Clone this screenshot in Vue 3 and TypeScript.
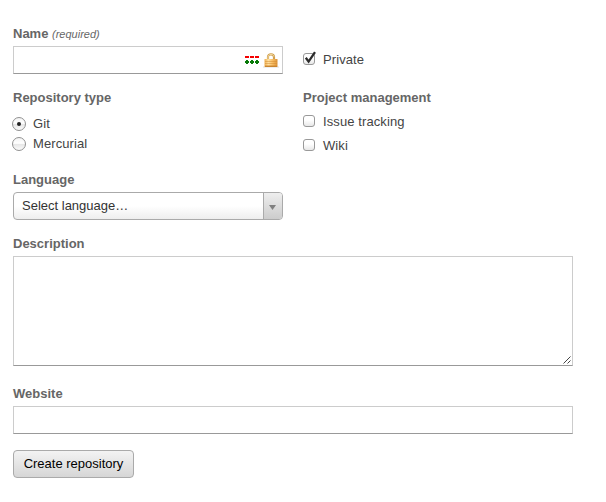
<script setup lang="ts">
import { ref } from 'vue'

interface Choice {
  id: string
  label: string
}

const repositoryTypes: Choice[] = [
  { id: 'git', label: 'Git' },
  { id: 'hg', label: 'Mercurial' },
]
const features = ref([
  { id: 'issues', label: 'Issue tracking', checked: false },
  { id: 'wiki', label: 'Wiki', checked: false },
])
const name = ref('')
const isPrivate = ref(true)
const scm = ref('git')
const description = ref('')
const website = ref('')
</script>

<template>
  <form class="form" @submit.prevent>
    <div class="row">
      <div class="field">
        <label class="title" for="name">Name <em>(required)</em></label>
        <div class="box">
          <input id="name" v-model="name" type="text" />
          <svg class="dots" width="14" height="9" viewBox="0 0 14 9">
            <path d="M0 0h4v2H0zM5 0h4v2H5zM10 0h4v2h-4z" fill="#f40000" />
            <path
              d="M1 4h2v1h1v2H3v1H1V7H0V5h1zM6 4h2v1h1v2H8v1H6V7H5V5h1zM11 4h2v1h1v2h-1v1h-2V7h-1V5h1z"
              fill="#087a08"
            />
          </svg>
          <svg class="lock" width="16" height="15" viewBox="0 0 16 15">
            <defs>
              <linearGradient id="gold" x1="0" x2="1" y1="0" y2="0">
                <stop offset="0" stop-color="#efb050" />
                <stop offset=".3" stop-color="#ffe0a0" />
                <stop offset=".6" stop-color="#f8c068" />
                <stop offset="1" stop-color="#dc9338" />
              </linearGradient>
            </defs>
            <path d="M0 14h16" stroke="#ddd" />
            <path d="M5 7V4C5 2.3 6 1.3 8 1.3s3 1 3 2.7V7" fill="none" stroke="#d0a050" stroke-width="2.2" />
            <path d="M5 6V4C5 2.6 6 1.4 8 1.4s2.6.8 2.9 2.2" fill="none" stroke="#f2d79b" />
            <rect x="1.5" y="6" width="13" height="8" rx=".5" fill="url(#gold)" />
            <path d="M2 8.5h12M2 10.5h12M2 12.5h12" stroke="#d38a30" stroke-opacity=".5" />
            <path d="M2 13.5h12" stroke="#c98530" />
          </svg>
        </div>
      </div>
      <label class="choice private">
        <span class="check">
          <svg v-if="isPrivate" class="tick" width="14" height="14" viewBox="0 0 14 14">
            <path d="M2.8 6.8L5.6 10.6L12 1.2" fill="none" stroke="#2b2b2b" stroke-width="2.3" />
          </svg>
        </span>
        <input v-model="isPrivate" class="native" type="checkbox" />
        <span class="caption">Private</span>
      </label>
    </div>

    <div class="row types">
      <div class="field">
        <div class="title">Repository type</div>
        <div class="radios">
          <label v-for="type in repositoryTypes" :key="type.id" class="choice">
            <span class="radio" :class="{ selected: scm === type.id }"></span>
            <input v-model="scm" class="native" type="radio" :value="type.id" />
            {{ type.label }}
          </label>
        </div>
      </div>
      <div>
        <div class="title">Project management</div>
        <div class="checks">
          <label v-for="feature in features" :key="feature.id" class="choice">
            <span class="check">
              <svg v-if="feature.checked" class="tick" width="14" height="14" viewBox="0 0 14 14">
                <path d="M2.8 6.8L5.6 10.6L12 1.2" fill="none" stroke="#2b2b2b" stroke-width="2.3" />
              </svg>
            </span>
            <input v-model="feature.checked" class="native" type="checkbox" />
            <span class="caption">{{ feature.label }}</span>
          </label>
        </div>
      </div>
    </div>

    <div class="field language">
      <div class="title">Language</div>
      <button class="select" type="button">
        <span class="value">Select language…</span>
        <span class="arrow">
          <svg width="7" height="5" viewBox="0 0 7 5"><path d="M0 0h7L3.5 5z" fill="#808080" /></svg>
        </span>
      </button>
    </div>

    <div class="description">
      <label class="title" for="description">Description</label>
      <div class="box area">
        <textarea id="description" v-model="description"></textarea>
        <svg class="grip" width="8" height="8" viewBox="0 0 8 8">
          <path d="M0.5 7.5L7.5 0.5M4.5 7.5L7.5 4.5" stroke="#444" stroke-width="1" />
        </svg>
      </div>
    </div>

    <div class="website">
      <label class="title" for="website">Website</label>
      <div class="box"><input id="website" v-model="website" type="text" /></div>
    </div>

    <button class="submit" type="submit">Create repository</button>
  </form>
</template>

<style>
body {
  background: #fff;
}
</style>

<style scoped>
.form {
  box-sizing: border-box;
  width: 573px;
  padding: 24px 0 0 13px;
  font: 13px/20px "Liberation Sans", Arial, sans-serif;
  color: #444;
}
.row {
  display: flex;
  gap: 20px;
}
.field {
  width: 270px;
}
.title {
  display: block;
  height: 20px;
  margin-bottom: 2px;
  font-weight: bold;
  color: #666;
}
.title em {
  font-size: 11px;
  font-weight: normal;
}
.box {
  position: relative;
  box-sizing: border-box;
  height: 28px;
  border: 1px solid #ccc;
  border-bottom-color: #999;
}
.box input,
.box textarea {
  display: block;
  box-sizing: border-box;
  width: 100%;
  height: 100%;
  padding: 4px;
  border: 0;
  outline: 0;
  background: transparent;
  font: inherit;
  resize: none;
}
.dots {
  position: absolute;
  right: 23px;
  top: 9px;
}
.lock {
  position: absolute;
  right: 3px;
  top: 6px;
}
.choice {
  display: flex;
  align-items: center;
  height: 20px;
  letter-spacing: 0.1px;
}
.native {
  position: absolute;
  opacity: 0;
  pointer-events: none;
}
.check {
  position: relative;
  box-sizing: border-box;
  width: 12px;
  height: 12px;
  margin-right: 8px;
  border: 1px solid #999;
  border-radius: 3px;
  background: linear-gradient(#fff, #fff 40%, #e8e8e8);
}
.tick {
  position: absolute;
  left: -1px;
  top: -3px;
}
.private {
  margin-top: 25px;
}
.caption {
  padding-top: 2px;
}
.types {
  margin-top: 14px;
}
.radios {
  margin: 6px 0 0 -1px;
}
.radio {
  display: flex;
  align-items: center;
  justify-content: center;
  box-sizing: border-box;
  width: 14px;
  height: 14px;
  margin-right: 7px;
  border: 1px solid #919191;
  border-radius: 50%;
  background: linear-gradient(#f4f4f4, #fff 45%, #e6e6e6 50%, #fbfbfb);
}
.radio.selected::after {
  content: "";
  width: 4px;
  height: 4px;
  border-radius: 50%;
  background: #222;
}
.checks {
  display: grid;
  gap: 4px;
  margin-top: 3px;
}
.language {
  margin-top: 15px;
}
.select {
  display: flex;
  box-sizing: border-box;
  width: 270px;
  height: 28px;
  padding: 0;
  border: 1px solid #aaa;
  border-radius: 4px;
  overflow: hidden;
  background: linear-gradient(#fff 50%, #eee);
  font: inherit;
  color: #333;
  text-align: left;
}
.value {
  flex: 1;
  padding-left: 8px;
  line-height: 26px;
}
.arrow {
  display: flex;
  align-items: center;
  justify-content: center;
  box-sizing: border-box;
  width: 19px;
  height: 26px;
  padding: 2px 1px 0 0;
  border-left: 1px solid #aaa;
  background: linear-gradient(#eee, #ccc);
}
.description {
  margin-top: 14px;
}
.area {
  height: 110px;
}
.grip {
  position: absolute;
  right: 1px;
  bottom: 1px;
}
.website {
  margin-top: 18px;
}
.submit {
  display: block;
  box-sizing: border-box;
  width: 121px;
  height: 28px;
  margin-top: 16px;
  padding: 0;
  border: 1px solid #aaa;
  border-radius: 4px;
  background: linear-gradient(#f3f3f3, #d6d6d6);
  font: inherit;
  line-height: 26px;
  color: #000;
}
</style>
